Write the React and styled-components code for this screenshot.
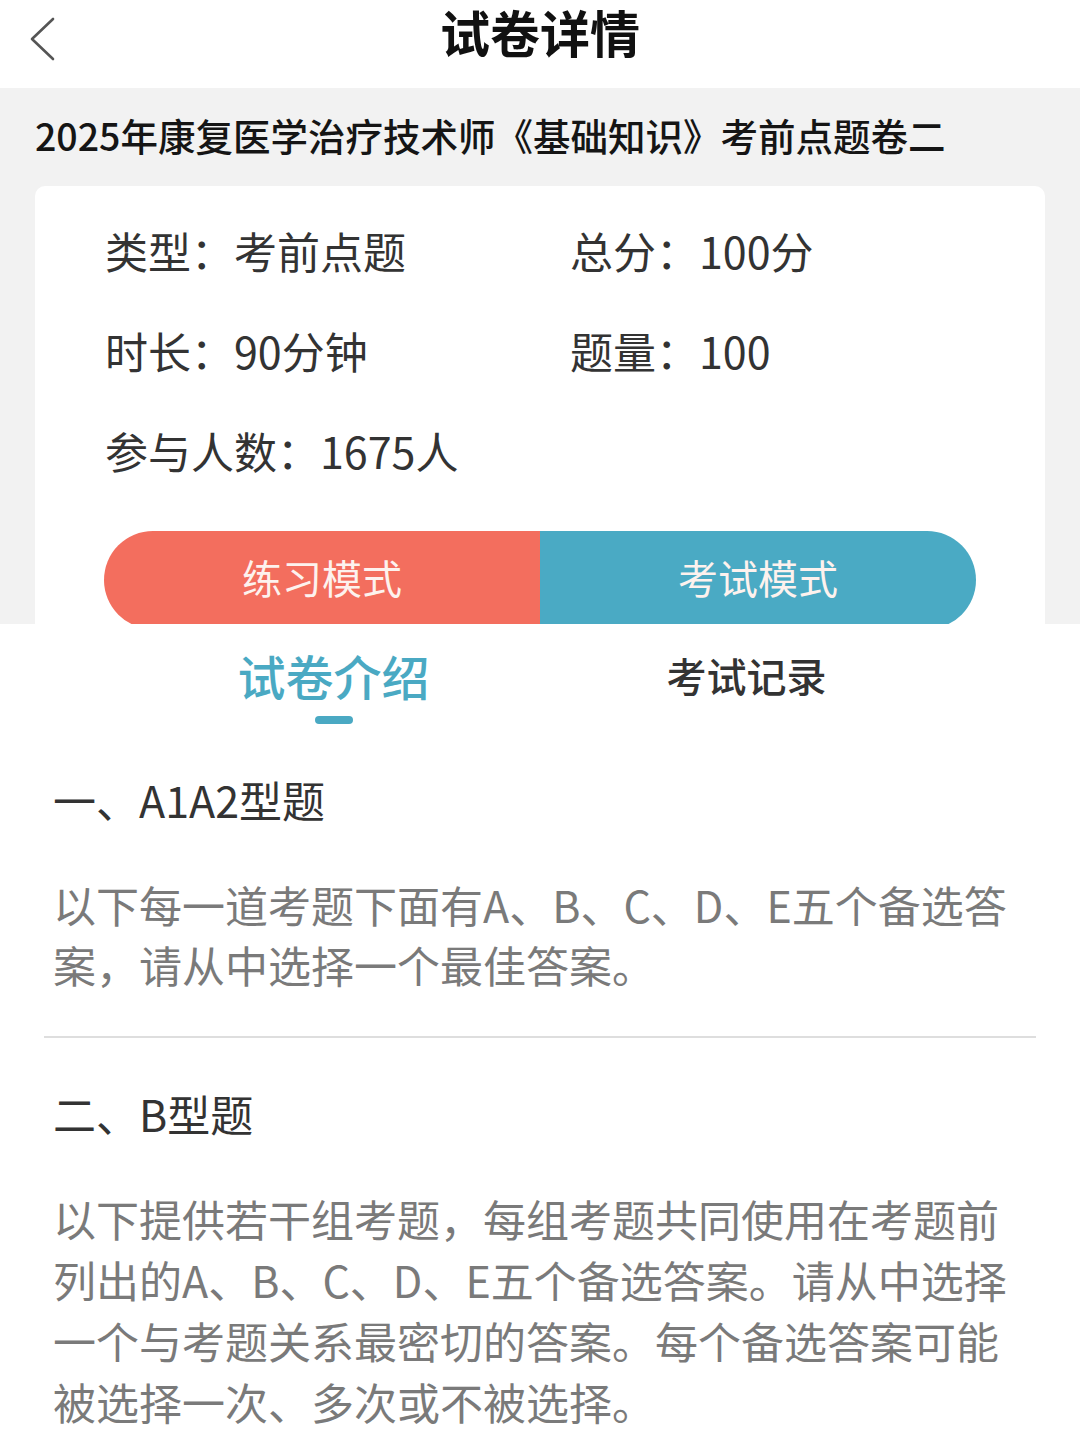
import React from 'react';
import styled, { createGlobalStyle } from 'styled-components';

const GlobalStyle = createGlobalStyle`
  html, body {
    margin: 0;
    padding: 0;
    background: #ffffff;
  }
  body {
    font-family: "Noto Sans CJK SC", "Noto Sans", sans-serif;
    color: #333333;
  }
`;

const Page = styled('div')`
  width: 1080px;
  min-height: 1440px;
  background: #ffffff;
  overflow: hidden;
`;

const NavBar = styled('div')`
  display: grid;
  grid-template-columns: 1fr auto 1fr;
  height: 88px;
  background: #ffffff;
`;

const BackButton = styled('div')`
  display: flex;
  align-items: flex-start;
  padding: 17px 0 0 28px;
`;

const NavTitle = styled('h1')`
  margin: 0;
  padding-top: 1px;
  font-size: 50px;
  font-weight: 700;
  line-height: 60px;
  color: #111111;
`;

const Summary = styled('div')`
  background: #f2f2f2;
  padding: 0 35px;
`;

const PaperName = styled('div')`
  height: 98px;
  line-height: 94px;
  font-size: 37.5px;
  font-weight: 500;
  color: #151515;
  white-space: nowrap;
`;

const Card = styled('div')`
  background: #ffffff;
  border-radius: 10px 10px 0 0;
  padding: 14px 70px 0 70px;
  overflow: hidden;
`;

const InfoGrid = styled('div')`
  display: grid;
  grid-template-columns: 465px 1fr;
  grid-auto-rows: 100px;
`;

const InfoItem = styled('div')`
  font-size: 43px;
  line-height: 100px;
  color: #333333;
  white-space: nowrap;
`;

const ModeBar = styled('div')`
  display: flex;
  width: 872px;
  height: 98px;
  margin: 31px 0 -5px -1px;
  border-radius: 49px;
  overflow: hidden;
`;

const ModeButton = styled('button')`
  flex: 1;
  border: none;
  margin: 0;
  padding: 0 0 6px 0;
  background: ${(p) => p.$color};
  color: #fdf2ee;
  font-family: inherit;
  font-size: 40px;
  line-height: 92px;
  cursor: pointer;
`;

const Tabs = styled('div')`
  display: grid;
  grid-template-columns: 1fr 1fr;
  padding: 21px 127px 0 127px;
`;

const Tab = styled('div')`
  display: flex;
  flex-direction: column;
  align-items: center;
`;

const TabLabel = styled('div')`
  height: 60px;
  line-height: 60px;
  font-size: ${(p) => (p.$active ? '48px' : '40px')};
  font-weight: 500;
  color: ${(p) => (p.$active ? '#4aa9c3' : '#333333')};
`;

const TabIndicator = styled('div')`
  width: 38px;
  height: 8px;
  margin-top: 11px;
  border-radius: 4px;
  background: ${(p) => (p.$active ? '#4aa9c3' : 'transparent')};
`;

const Intro = styled('div')`
  padding: 0 44px;
`;

const Section = styled('div')`
  padding: 45px 9px 42px 9px;
  border-bottom: ${(p) => (p.$last ? 'none' : '2px solid #dedede')};
`;

const SectionTitle = styled('div')`
  font-size: 43px;
  line-height: 60px;
  color: #333333;
  white-space: nowrap;
`;

const SectionText = styled('p')`
  margin: 45px 0 0 0;
  font-size: 43px;
  line-height: ${(p) => p.$lh || 60}px;
  color: #7a7a7a;
  white-space: nowrap;
`;

const ChevronLeft = () => (
  <svg width="28" height="44" viewBox="0 0 28 44">
    <polyline
      points="25,2 4,22 25,42"
      fill="none"
      stroke="#555555"
      strokeWidth="2.6"
      strokeLinecap="round"
      strokeLinejoin="round"
    />
  </svg>
);

const info = [
  '类型：考前点题',
  '总分：100分',
  '时长：90分钟',
  '题量：100',
  '参与人数：1675人',
];

export default function App() {
  return (
    <Page>
      <GlobalStyle />
      <NavBar>
        <BackButton>
          <ChevronLeft />
        </BackButton>
        <NavTitle>试卷详情</NavTitle>
        <div />
      </NavBar>
      <Summary>
        <PaperName>2025年康复医学治疗技术师《基础知识》考前点题卷二</PaperName>
        <Card>
          <InfoGrid>
            {info.map((t) => (
              <InfoItem key={t}>{t}</InfoItem>
            ))}
          </InfoGrid>
          <ModeBar>
            <ModeButton $color="#f36e5e">练习模式</ModeButton>
            <ModeButton $color="#4aaac4">考试模式</ModeButton>
          </ModeBar>
        </Card>
      </Summary>
      <Tabs>
        <Tab>
          <TabLabel $active>试卷介绍</TabLabel>
          <TabIndicator $active />
        </Tab>
        <Tab>
          <TabLabel>考试记录</TabLabel>
          <TabIndicator />
        </Tab>
      </Tabs>
      <Intro>
        <Section>
          <SectionTitle>一、A1A2型题</SectionTitle>
          <SectionText>
            以下每一道考题下面有A、B、C、D、E五个备选答
            <br />
            案，请从中选择一个最佳答案。
          </SectionText>
        </Section>
        <Section $last>
          <SectionTitle>二、B型题</SectionTitle>
          <SectionText $lh={61}>
            以下提供若干组考题，每组考题共同使用在考题前
            <br />
            列出的A、B、C、D、E五个备选答案。请从中选择
            <br />
            一个与考题关系最密切的答案。每个备选答案可能
            <br />
            被选择一次、多次或不被选择。
          </SectionText>
        </Section>
      </Intro>
    </Page>
  );
}
